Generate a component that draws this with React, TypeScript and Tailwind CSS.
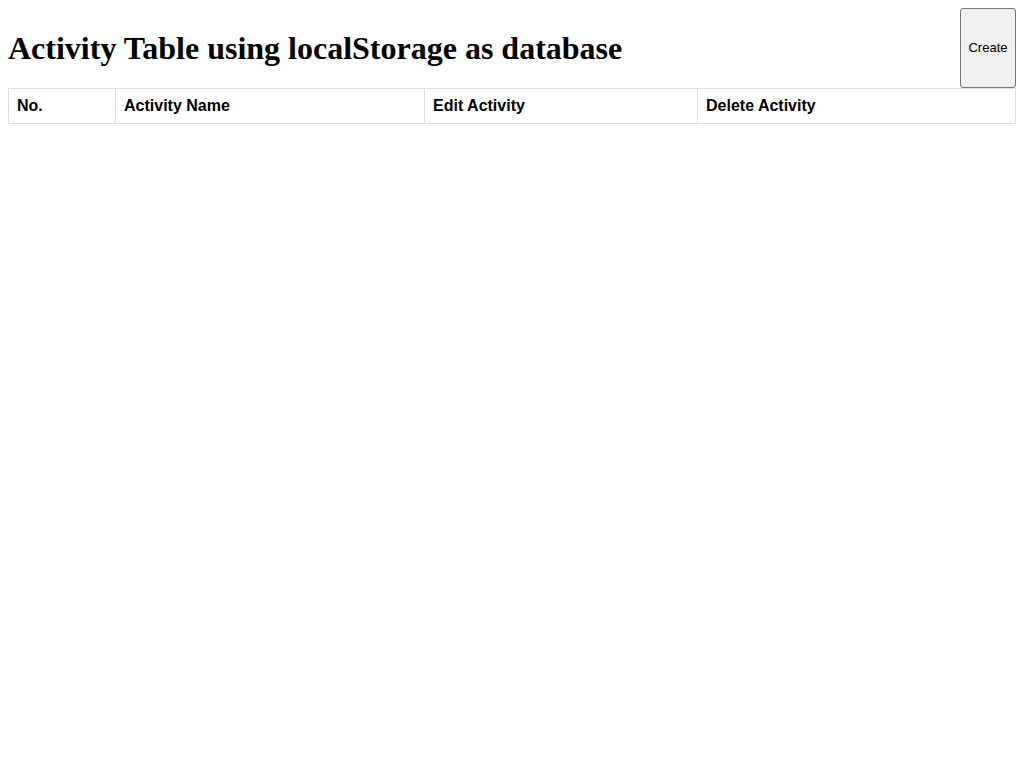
export default function App() {
  const headers = [
    { label: "No.", w: "w-[107px]" },
    { label: "Activity Name", w: "w-[309px]" },
    { label: "Edit Activity", w: "w-[273px]" },
    { label: "Delete Activity", w: "" },
  ];

  return (
    <div className="min-h-[768px] bg-white p-2 text-black">
      {/* 상단: 제목 + 생성 버튼 */}
      <div className="flex h-20 items-center justify-between">
        <h1 className="text-[32px] font-bold leading-[37px] font-['Liberation_Serif',serif]">
          Activity Table using localStorage as database
        </h1>
        <button className="h-20 w-14 rounded-[3px] border border-[#767676] bg-[#efefef] text-[13px] font-['Liberation_Sans',Arial,sans-serif]">
          Create
        </button>
      </div>

      {/* 테이블 */}
      <table className="w-full border-collapse font-['Liberation_Sans',Arial,sans-serif]">
        <thead>
          <tr>
            {headers.map((h) => (
              <th
                key={h.label}
                className={`${h.w} h-[35px] border border-[#dddddd] px-2 pt-0 pb-px text-left text-base font-bold`}
              >
                {h.label}
              </th>
            ))}
          </tr>
        </thead>
        <tbody />
      </table>
    </div>
  );
}
